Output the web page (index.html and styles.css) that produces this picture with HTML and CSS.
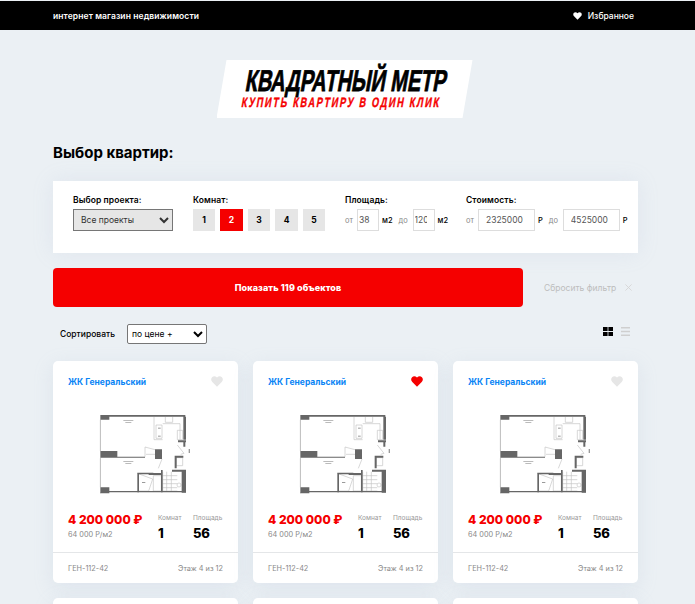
FILE: index.html
```html
<!DOCTYPE html>
<html lang="ru">
<head>
    <meta charset="UTF-8">
    <meta name="viewport" content="width=device-width, initial-scale=1.0">
    <title>Квадратный метр</title>
    <link rel="stylesheet" href="styles.css">
</head>
<body>
    <svg class="defs" width="0" height="0">
        <symbol id="heart" viewBox="0 0 24 22">
            <path d="M12 21.5 2.6 12C-.4 9-.4 4.8 2.2 2.3 4.9-.2 9-.2 12 3.2 15-.2 19.100-.2 21.800 2.300 24.400 4.800 24.400 9 21.400 12Z"/>
        </symbol>
        <symbol id="plan" viewBox="0 0 330 270">
            <g fill="none" stroke="#c4c4c4" stroke-width="2">
                <path d="M31 44V138M31 160V247M192 36V104H218M218 56H270V104M226 36V52H248V36"/>
                <path d="M198 60H216V100H198ZM262 76H278V104H262Z"/>
                <path d="M165 155V126L195 134M168 148H195M205 190 216 162M262 120 282 145 272 148"/>
                <path d="M258 158H278V182H258ZM190 212H214V258H190ZM218 200V258H262M218 212H262M218 224H262M218 236H262M218 248H262M230 200V258M244 200V258"/>
                <path d="M142 205 188 222 176 258H146"/>
                <circle cx="267" cy="240" r="6"/>
            </g>
            <g fill="#666">
                <path d="M30 30H286V35H58V44H30ZM280 35H288V104H280ZM264 106H288V112H264ZM280 112H286V125H280Z"/>
                <path d="M30 138H82V155H165V158H30ZM195 133H216V162H195Z"/>
                <path d="M142 203H190V208H147V262H142ZM176 204H216V210H176ZM213 195H218V262H213ZM246 194H288V200H246ZM254 152H280V158H260V190H254ZM275 200H288V263H275Z"/>
                <path d="M30 247H58V265H30ZM58 258H288V262H58Z"/>
            </g>
            <g fill="#9a9a9a">
                <rect x="100" y="46" width="30" height="2"/><rect x="106" y="51" width="18" height="2"/>
                <rect x="100" y="169" width="30" height="2"/><rect x="106" y="174" width="18" height="2"/>
                <rect x="156" y="231" width="10" height="3"/><rect x="204" y="68" width="8" height="3"/><rect x="204" y="92" width="8" height="3"/>
                <path d="M296 132h4v12h-4z"/>
            </g>
            <path d="M30 30H32V263H30Z" fill="#b5b5b5"/>
        </symbol>
    </svg>

    <header class="topbar">
        <span class="tagline">интернет магазин недвижимости</span>
        <a class="fav-link"><svg class="fav-icon"><use href="#heart"/></svg>Избранное</a>
    </header>

    <div class="logo-wrap">
        <div class="logo">
            <div class="logo-title">КВАДРАТНЫЙ МЕТР</div>
            <div class="logo-sub">КУПИТЬ КВАРТИРУ В ОДИН КЛИК</div>
        </div>
    </div>

    <main class="page">
        <h1>Выбор квартир:</h1>

        <section class="filter">
            <div class="field field-project">
                <label>Выбор проекта:</label>
                <select class="project-select"><option>Все проекты</option></select>
            </div>
            <div class="field field-rooms">
                <label>Комнат:</label>
                <div class="rooms">
                    <span class="room">1</span>
                    <span class="room active">2</span>
                    <span class="room">3</span>
                    <span class="room">4</span>
                    <span class="room">5</span>
                </div>
            </div>
            <div class="field field-area">
                <label>Площадь:</label>
                <div class="range">
                    <span class="hint">от</span><input class="box box-small" value="38"><span class="unit">м2</span>
                    <span class="hint hint-to">до</span><input class="box box-small" value="120"><span class="unit">м2</span>
                </div>
            </div>
            <div class="field">
                <label>Стоимость:</label>
                <div class="range">
                    <span class="hint">от</span><input class="box box-price" value="2325000"><span class="unit">Р</span>
                    <span class="hint hint-to">до</span><input class="box box-price" value="4525000"><span class="unit">Р</span>
                </div>
            </div>
        </section>

        <div class="actions">
            <button class="show-btn">Показать 119 объектов</button>
            <div class="reset">Сбросить фильтр<svg class="reset-x" viewBox="0 0 8 8"><path d="M.5.500 7.500 7.500M7.500.500 .5 7.500"/></svg></div>
        </div>

        <div class="sort-row">
            <div class="sort">
                <span>Сортировать</span>
                <select class="sort-select"><option>по цене +</option></select>
            </div>
            <div class="view-switch">
                <svg class="view-grid" viewBox="0 0 10 9"><path d="M0 0h4.600v4.100H0zM5.400 0H10v4.100H5.400zM0 4.900h4.600V9H0zM5.400 4.900H10V9H5.400z"/></svg>
                <svg class="view-list" viewBox="0 0 9 9"><path d="M0 0h9v1.500H0zM0 3.700h9v1.500H0zM0 7.400h9V9H0z"/></svg>
            </div>
        </div>

        <div class="cards">
            <article class="card">
                <div class="card-head"><a class="project">ЖК Генеральский</a><svg class="like"><use href="#heart"/></svg></div>
                <svg class="plan"><use href="#plan"/></svg>
                <div class="card-info">
                    <div class="prices"><div class="price">4 200 000 ₽</div><div class="per-meter">64 000 Р/м2</div></div>
                    <div class="stat stat-rooms"><span>Комнат</span><b>1</b></div>
                    <div class="stat"><span>Площадь</span><b>56</b></div>
                </div>
                <div class="card-foot"><span>ГЕН-112-42</span><span>Этаж 4 из 12</span></div>
            </article>
            <article class="card">
                <div class="card-head"><a class="project">ЖК Генеральский</a><svg class="like liked"><use href="#heart"/></svg></div>
                <svg class="plan"><use href="#plan"/></svg>
                <div class="card-info">
                    <div class="prices"><div class="price">4 200 000 ₽</div><div class="per-meter">64 000 Р/м2</div></div>
                    <div class="stat stat-rooms"><span>Комнат</span><b>1</b></div>
                    <div class="stat"><span>Площадь</span><b>56</b></div>
                </div>
                <div class="card-foot"><span>ГЕН-112-42</span><span>Этаж 4 из 12</span></div>
            </article>
            <article class="card">
                <div class="card-head"><a class="project">ЖК Генеральский</a><svg class="like"><use href="#heart"/></svg></div>
                <svg class="plan"><use href="#plan"/></svg>
                <div class="card-info">
                    <div class="prices"><div class="price">4 200 000 ₽</div><div class="per-meter">64 000 Р/м2</div></div>
                    <div class="stat stat-rooms"><span>Комнат</span><b>1</b></div>
                    <div class="stat"><span>Площадь</span><b>56</b></div>
                </div>
                <div class="card-foot"><span>ГЕН-112-42</span><span>Этаж 4 из 12</span></div>
            </article>
            <article class="card card-next"></article>
            <article class="card card-next"></article>
            <article class="card card-next"></article>
        </div>
    </main>
</body>
</html>
```

FILE: styles.css
```css
html {
    height: 604px;
    overflow: hidden;
}

body {
    margin: 0;
    height: 604px;
    overflow: hidden;
    background-color: #ebf0f4;
    color: #000;
    font-family: "Inter", "Noto Sans", sans-serif;
}

.defs {
    position: absolute;
}

.topbar {
    height: 29px;
    margin-top: 1px;
    padding: 0 61px 0 53px;
    background-color: #000;
    color: #fff;
    display: flex;
    align-items: center;
    justify-content: space-between;
}

.tagline {
    font-size: 8.500px;
    font-weight: 600;
    letter-spacing: .1px;
}

.fav-link {
    font-size: 8.500px;
    font-weight: 500;
    display: flex;
    align-items: center;
}

.fav-icon {
    width: 9px;
    height: 8px;
    margin-right: 6px;
    fill: #fff;
}

.logo-wrap {
    display: flex;
    justify-content: center;
    padding: 30px 6px 0 0;
}

.logo {
    width: 256px;
    height: 58px;
    background-color: #fff;
    clip-path: polygon(10px 0, 100% 0, 246px 100%, 0 100%);
    overflow: hidden;
}

.logo-title,
.logo-sub {
    font-family: "Liberation Sans", sans-serif;
    font-weight: 700;
    white-space: nowrap;
    transform-origin: 0 0;
}

.logo-title {
    font-size: 30px;
    line-height: 30px;
    margin-top: 6px;
    color: #000;
    -webkit-text-stroke: .8px #000;
    transform: translateX(32px) skewX(-10deg) scaleX(.663);
}

.logo-sub {
    font-size: 13.500px;
    line-height: 14px;
    color: #f50000;
    letter-spacing: 2.500px;
    -webkit-text-stroke: .4px #f50000;
    transform: translateX(26px) skewX(-10deg) scaleX(.68);
}

.page {
    padding: 0 57px 0 53px;
}

h1 {
    margin: 24px 0 0;
    font-size: 15px;
    line-height: 22px;
    font-weight: 700;
}

.filter {
    height: 72px;
    margin-top: 17px;
    padding: 14px 0 0 20px;
    box-sizing: border-box;
    background-color: #fff;
    box-shadow: 0 0 20px rgba(160, 175, 205, .15);
    display: flex;
}

.field label {
    display: block;
    font-size: 8.500px;
    line-height: 10px;
    font-weight: 600;
    letter-spacing: .1px;
    margin-bottom: 4px;
}

.field-project {
    width: 120px;
}

.field-rooms {
    width: 152px;
}

.field-area {
    width: 121px;
}

select {
    display: block;
    box-sizing: border-box;
    font-family: inherit;
    font-size: 8.500px;
    border: 1px solid #767676;
}

.project-select {
    width: 100px;
    height: 22px;
    padding: 0 3px;
    background-color: #e6e6e6;
    color: #333;
    border-radius: 0;
}

.sort-select {
    width: 80px;
    height: 20px;
    padding: 0;
    background-color: #fff;
    color: #000;
    border-radius: 2px;
}

.rooms {
    display: flex;
    gap: 5px;
}

.room {
    width: 22px;
    height: 22px;
    background-color: #e6e6e6;
    font-size: 8.500px;
    font-weight: 700;
    display: flex;
    align-items: center;
    justify-content: center;
}

.room:nth-child(even) {
    width: 23px;
}

.room.active {
    background-color: #f50000;
    color: #fff;
}

.range {
    display: flex;
    align-items: center;
    height: 22px;
}

.hint {
    width: 8px;
    font-size: 7.500px;
    color: #888;
    margin-right: 4px;
    white-space: nowrap;
}

.hint-to {
    width: 10px;
    margin: 0 4px 0 6px;
}

.box {
    box-sizing: border-box;
    height: 22px;
    margin: 0;
    border: 1px solid #ddd;
    background-color: #fff;
    font-family: inherit;
    font-size: 8.500px;
    color: #555;
}

.box-small {
    width: 22px;
    padding: 0 7px 0 1px;
}

.box-price {
    width: 57px;
    padding: 0 2px 0 7px;
}

.unit {
    font-size: 7.500px;
    font-weight: 500;
    margin-left: 3px;
}

.actions {
    display: flex;
    align-items: center;
    margin-top: 15px;
}

.show-btn {
    width: 470px;
    height: 39px;
    border: 0;
    border-radius: 4px;
    background-color: #f50000;
    color: #fff;
    font-family: inherit;
    font-size: 9px;
    font-weight: 800;
    letter-spacing: .1px;
}

.reset {
    margin-left: 21px;
    font-size: 8.500px;
    color: #bdbdbd;
    display: flex;
    align-items: center;
}

.reset-x {
    width: 7px;
    height: 7px;
    margin-left: 9px;
    stroke: #d5d5d5;
    stroke-width: 1;
    fill: none;
}

.sort-row {
    display: flex;
    justify-content: space-between;
    align-items: flex-start;
    margin-top: 17px;
}

.sort {
    display: flex;
    align-items: center;
    padding-left: 7px;
    font-size: 8.500px;
    font-weight: 500;
    gap: 12px;
}

.view-switch {
    display: flex;
    gap: 8px;
    padding: 3px 8px 0 0;
}

.view-grid {
    width: 10px;
    height: 9px;
    fill: #000;
}

.view-list {
    width: 9px;
    height: 9px;
    fill: #cfcfcf;
}

.cards {
    display: grid;
    grid-template-columns: repeat(3, 185px);
    gap: 15px;
    margin-top: 17px;
}

.card {
    height: 222px;
    background-color: #fff;
    border-radius: 5px;
    box-shadow: 0 5px 20px rgba(160, 175, 205, .18);
}

.card-head {
    display: flex;
    justify-content: space-between;
    padding: 14px 15px 0;
    height: 22px;
}

.project {
    color: #0a84f5;
    font-size: 8.500px;
    line-height: 14px;
    font-weight: 700;
}

.like {
    width: 12px;
    height: 11px;
    margin-top: 1px;
    fill: #e6e6e6;
}

.like.liked {
    fill: #f50000;
}

.plan {
    display: block;
    width: 110px;
    height: 90px;
    margin: 8px 0 0 37px;
}

.card-info {
    display: flex;
    padding: 9px 15px 0;
    height: 48px;
}

.prices {
    width: 90px;
}

.price {
    margin-top: 9px;
    color: #f50000;
    font-size: 12px;
    line-height: 14px;
    font-weight: 800;
    white-space: nowrap;
}

.per-meter {
    margin-top: 3px;
    color: #888;
    font-size: 7.300px;
}

.stat {
    padding-top: 10px;
}

.stat span {
    display: block;
    color: #999;
    font-size: 6.500px;
    line-height: 8px;
    white-space: nowrap;
}

.stat b {
    display: block;
    margin-top: 3px;
    font-size: 13px;
    line-height: 16px;
    font-weight: 800;
    letter-spacing: -.3px;
}

.stat-rooms {
    width: 35px;
}

.card-foot {
    display: flex;
    justify-content: space-between;
    align-items: center;
    height: 30px;
    padding: 0 15px;
    border-top: 1px solid #e4e6e8;
    color: #888;
    font-size: 7.300px;
}
```
